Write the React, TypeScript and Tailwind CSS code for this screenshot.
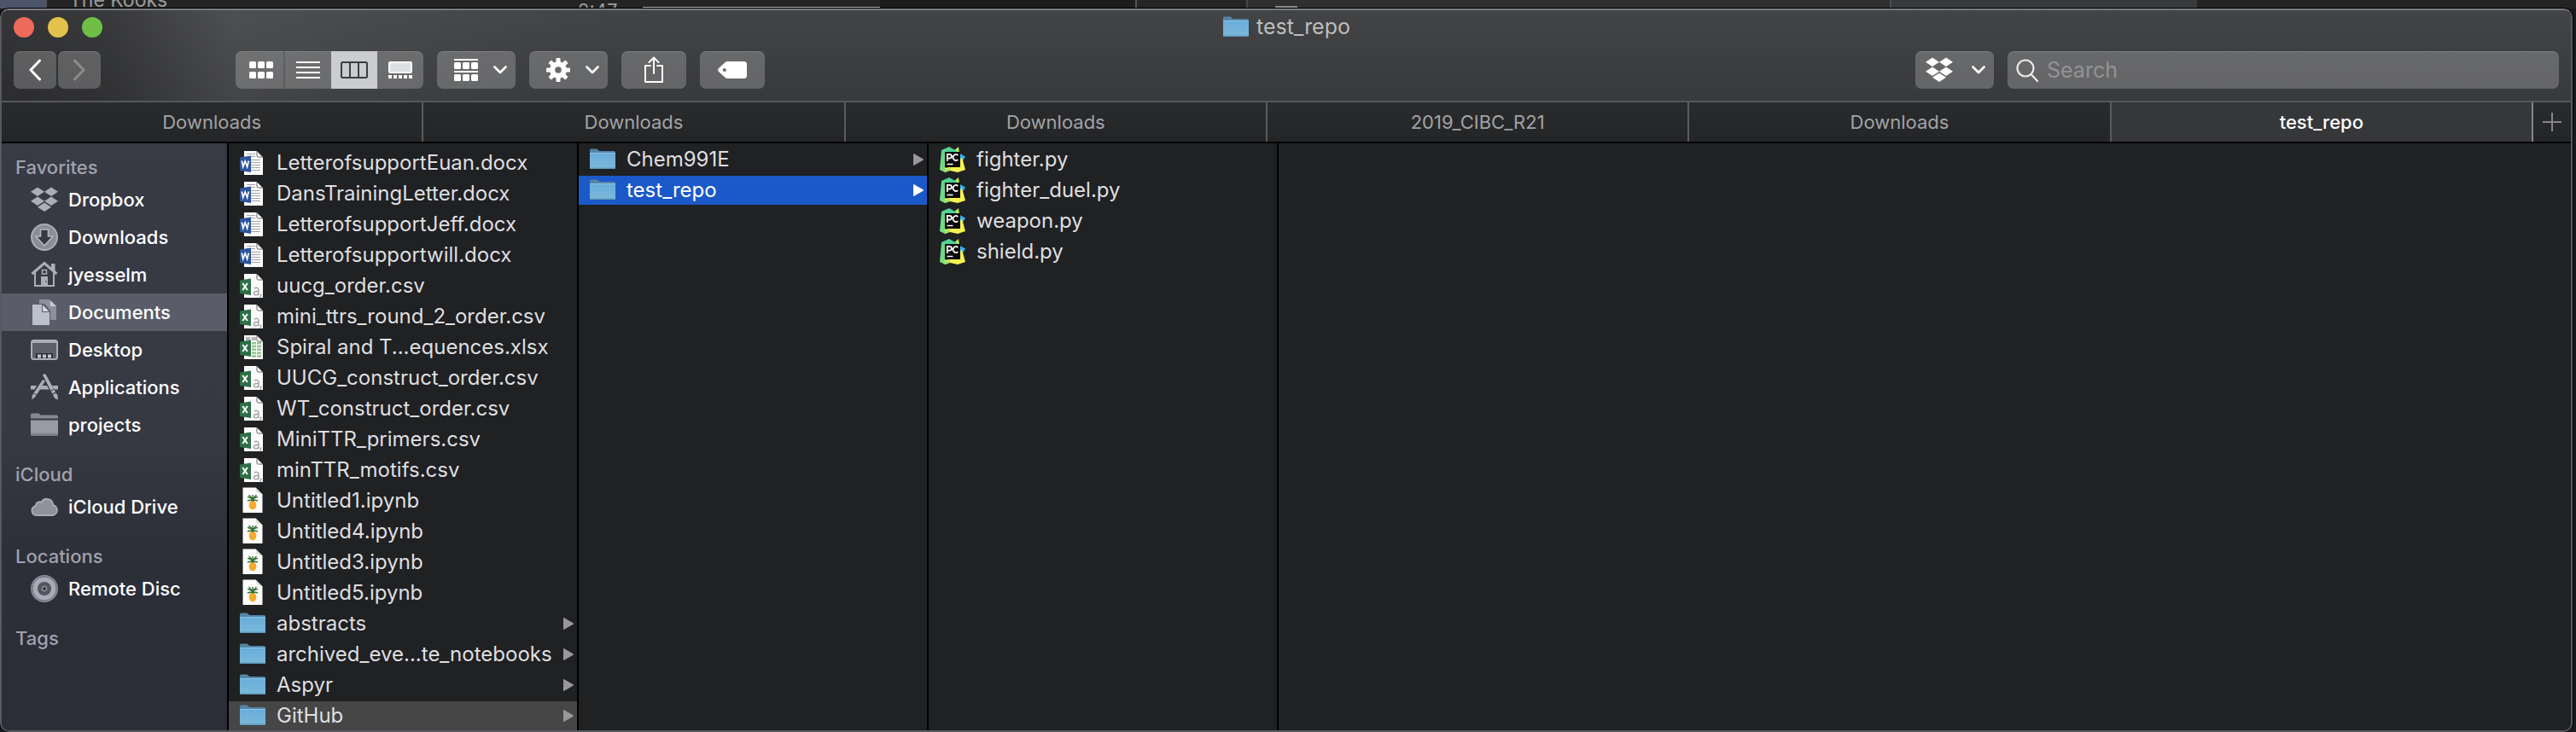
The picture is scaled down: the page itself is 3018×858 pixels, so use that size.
import React from "react";

type Kind = "word" | "csv" | "xlsx" | "notebook" | "folder" | "python";
type Entry = { name: string; kind: Kind; state?: "selected" | "path" };

const documents: Entry[] = [
  { name: "LetterofsupportEuan.docx", kind: "word" },
  { name: "DansTrainingLetter.docx", kind: "word" },
  { name: "LetterofsupportJeff.docx", kind: "word" },
  { name: "Letterofsupportwill.docx", kind: "word" },
  { name: "uucg_order.csv", kind: "csv" },
  { name: "mini_ttrs_round_2_order.csv", kind: "csv" },
  { name: "Spiral and T...equences.xlsx", kind: "xlsx" },
  { name: "UUCG_construct_order.csv", kind: "csv" },
  { name: "WT_construct_order.csv", kind: "csv" },
  { name: "MiniTTR_primers.csv", kind: "csv" },
  { name: "minTTR_motifs.csv", kind: "csv" },
  { name: "Untitled1.ipynb", kind: "notebook" },
  { name: "Untitled4.ipynb", kind: "notebook" },
  { name: "Untitled3.ipynb", kind: "notebook" },
  { name: "Untitled5.ipynb", kind: "notebook" },
  { name: "abstracts", kind: "folder" },
  { name: "archived_eve...te_notebooks", kind: "folder" },
  { name: "Aspyr", kind: "folder" },
  { name: "GitHub", kind: "folder", state: "path" },
];

const github: Entry[] = [
  { name: "Chem991E", kind: "folder" },
  { name: "test_repo", kind: "folder", state: "selected" },
];

const repo: Entry[] = [
  { name: "fighter.py", kind: "python" },
  { name: "fighter_duel.py", kind: "python" },
  { name: "weapon.py", kind: "python" },
  { name: "shield.py", kind: "python" },
];

const tabs = ["Downloads", "Downloads", "Downloads", "2019_CIBC_R21", "Downloads", "test_repo"];

/* ---------- file icons, 32 x 32 ---------- */

function FolderIcon() {
  return (
    <svg viewBox="0 0 32 32" className="size-8 shrink-0" aria-hidden="true">
      <defs>
        <linearGradient id="folder-front" x1="0" y1="0" x2="0" y2="1">
          <stop offset="0" stopColor="#69addb" />
          <stop offset="1" stopColor="#7cb8da" />
        </linearGradient>
      </defs>
      <path d="M1 5a1.500 1.500 0 0 1 1.500-1.500h6.500c1.600 0 2 2.500 4 2.500h16.500a1.500 1.500 0 0 1 1.500 1.500V13H1z" fill="#5484a5" />
      <path d="M1 8.500h30V26a1 1 0 0 1-1 1H2a1 1 0 0 1-1-1z" fill="url(#folder-front)" />
      <path d="M1 8h30v1H1z" fill="#8ac6ea" />
      <path d="M1 25.500h30V26a1 1 0 0 1-1 1H2a1 1 0 0 1-1-1z" fill="#5e97ba" />
    </svg>
  );
}

function Page() {
  return (
    <>
      <path d="M6 2h15l7 7v21H6z" fill="#fbfbfb" />
      <path d="M21 2l7 7h-5.500A1.500 1.500 0 0 1 21 7.500z" fill="#fff" stroke="#3c3c3c" strokeWidth=".8" />
    </>
  );
}

function WordIcon() {
  return (
    <svg viewBox="0 0 32 32" className="size-8 shrink-0" aria-hidden="true">
      <Page />
      <path d="M9 5.500h10M9 8.500h10M14 12.500h11M14 15.500h11M14 18.500h11M14 21.500h11M14 24.500h11" stroke="#a5a5a5" strokeWidth="1" />
      <path d="M1 9.500L14 7.500v19.500L1 25z" fill="#2f549b" />
      <path d="M3.300 13.500l1.500 7 2.400-6.500 2.400 6.500 1.700-7" fill="none" stroke="#fff" strokeWidth="1.700" />
    </svg>
  );
}

function ExcelBadge() {
  return (
    <>
      <path d="M1 9.500L14 7.500v19.500L1 25z" fill="#2f6f47" />
      <path d="M4.300 13l5.600 8M9.900 13l-5.600 8" stroke="#fff" strokeWidth="2" />
    </>
  );
}

function CsvIcon() {
  return (
    <svg viewBox="0 0 32 32" className="size-8 shrink-0" aria-hidden="true">
      <Page />
      <path d="M18 19.300c1.500-1.400 5-1.600 5 1.400V27M23 22.300c-3 0-5.600.4-5.600 2.500 0 2.800 4.400 2.600 5.600.2M26 25.500l-1 4" fill="none" stroke="#a2a2a2" strokeWidth="1.400" />
      <ExcelBadge />
    </svg>
  );
}

function XlsxIcon() {
  return (
    <svg viewBox="0 0 32 32" className="size-8 shrink-0" aria-hidden="true">
      <Page />
      <path d="M8 4h5v4H8zM14.500 4H20v4h-5.500z" fill="#b5b5b5" />
      <path d="M15 10h5v2.500h-5zM15 13.800h5v2.500h-5zM15 17.600h5v2.500h-5zM15 21.400h5v2.500h-5zM15 25.200h5v2.500h-5zM21 10h5v2.500h-5zM21 13.800h5v2.500h-5zM21 17.600h5v2.500h-5zM21 21.400h5v2.500h-5zM21 25.200h5v2.500h-5z" fill="#93c48f" />
      <ExcelBadge />
    </svg>
  );
}

function NotebookIcon() {
  return (
    <svg viewBox="0 0 32 32" className="size-8 shrink-0" aria-hidden="true">
      <path d="M4.500 0.500H19.500L27.500 8.500V30H4.500z" fill="#fcfcfc" />
      <path d="M19.500 0.500L27.500 8.500C25 7.500 22.500 7 20.500 5.500z" fill="#dcdcdc" />
      <ellipse cx="16" cy="21" rx="4.400" ry="5.200" fill="#f6ab2e" />
      <path d="M16 16V9M16 16c-1-3-3.500-4.500-6-4.500M16 16c1-3 3.500-4.500 6-4.500M16 15c-1.500-3-3-5-4.500-6M16 15c1.500-3 3-5 4.500-6M16 16c-2-1-4-1-6 0M16 16c2-1 4-1 6 0" fill="none" stroke="#356f35" strokeWidth="1.400" />
    </svg>
  );
}

function PythonIcon() {
  return (
    <svg viewBox="0 0 32 32" className="size-8 shrink-0" aria-hidden="true">
      <defs>
        <linearGradient id="py-left" x1="0" y1="1" x2="1" y2="0">
          <stop offset="0" stopColor="#7fe07c" />
          <stop offset="1" stopColor="#3ccba0" />
        </linearGradient>
      </defs>
      <path d="M23 8l8 4.500-3 5-5 1z" fill="#35b4e8" />
      <path d="M17 6l6-5 1 7-4 3z" fill="#b9e85c" />
      <path d="M3 5l9-4 9 5-3 6-10 2v14l-1 3-6-3z" fill="url(#py-left)" />
      <path d="M7 26l15-3 4-10 2 4 3 11-9 3-9-2-6 2z" fill="#f6f253" />
      <path d="M6 28l8-2-2 3-5 2z" fill="#97e36c" />
      <rect x="7" y="7" width="18" height="18" fill="#0b0b0b" />
      <path d="M9.800 18V9.800h2.700a2.200 2.200 0 0 1 0 4.800H9.800M22.300 11a3.400 3.400 0 1 0 0 5" fill="none" stroke="#fff" strokeWidth="1.700" />
      <path d="M9.500 21.500h7" stroke="#fff" strokeWidth="1.400" />
    </svg>
  );
}

const icons: Record<Kind, () => React.JSX.Element> = {
  word: WordIcon,
  csv: CsvIcon,
  xlsx: XlsxIcon,
  notebook: NotebookIcon,
  folder: FolderIcon,
  python: PythonIcon,
};

/* ---------- sidebar icons, 32 x 32 ---------- */

const side = "size-8 shrink-0 text-[#abadb9]";

const DropboxIcon = ({ className }: { className: string }) => (
  <svg viewBox="0 0 32 32" className={className} fill="currentColor" aria-hidden="true">
    <path d="M8 1.500l8 5.200-8 5.200-8-5.200zM24 1.500l8 5.200-8 5.200-8-5.200zM8 12.500l8 5.200-8 5.200-8-5.200zM24 12.500l8 5.200-8 5.200-8-5.200zM16 19.500l8 5.200-8 5.200-8-5.200z" />
  </svg>
);

const DownloadsIcon = () => (
  <svg viewBox="0 0 32 32" className={side} aria-hidden="true">
    <circle cx="16" cy="16" r="15" fill="#8a8c97" stroke="currentColor" strokeWidth="2" />
    <path d="M11.500 7h9v8h5.500L16 26 6 15h5.500z" fill="#363843" stroke="#b4b6c2" strokeWidth="1.600" />
  </svg>
);

const HomeIcon = () => (
  <svg viewBox="0 0 32 32" className={side} aria-hidden="true">
    <path d="M1.500 15L16 2.500 30.500 15" fill="none" stroke="currentColor" strokeWidth="3" />
    <path d="M24 3h4.500v10L24 9z" fill="currentColor" />
    <path d="M5 13v16h22V13" fill="none" stroke="currentColor" strokeWidth="2" />
    <path d="M13.500 10.500h5v4.500h-5z" fill="none" stroke="currentColor" strokeWidth="1.500" />
    <path d="M12 18h8v11h-8z" fill="currentColor" />
    <path d="M18 23v2" stroke="#363843" />
  </svg>
);

const DocumentsIcon = () => (
  <svg viewBox="0 0 32 32" className={side} aria-hidden="true">
    <path d="M10 1h12v8h8v16h-7V14l-7-8h-6z" fill="#8d909c" />
    <path d="M22.500 1.500l7.500 7.500h-7.500z" fill="#c7cad7" />
    <path d="M2 7h11v9h9v15H2z" fill="#bcc0ce" />
    <path d="M14 7.500l7.500 7.500H14z" fill="#d5d8e4" />
  </svg>
);

const DesktopIcon = () => (
  <svg viewBox="0 0 32 32" className={side} aria-hidden="true">
    <rect x="1" y="5" width="30" height="22" rx="2.500" fill="#5d5f6b" stroke="currentColor" strokeWidth="2" />
    <path d="M2 5h28v3H2z" fill="currentColor" />
    <path d="M6 20h20v6H6z" fill="#2d2f39" />
    <path d="M8 21.500h4v4H8zM14 21.500h4v4h-4zM20 21.500h4v4h-4z" fill="#c4c6d2" />
  </svg>
);

const ApplicationsIcon = () => (
  <svg viewBox="0 0 32 32" className={side} aria-hidden="true">
    <path d="M0 14h7l-2.500 4.500H0zM13 14h6l2.500 4.500h-11zM25 14h7v4.500h-4.500z" fill="currentColor" />
    <path d="M14 7l3 1.500L5.500 27 1 30.500 2 25z" fill="currentColor" />
    <path d="M14 1.500a2.200 2.200 0 0 1 3.700-.500L29 21.500l-3.700 2z" fill="currentColor" />
    <path d="M26 24.500l3.500-2c2 2.500 2.500 4 2.300 8-3-1-5-2.500-5.800-6z" fill="currentColor" />
    <path d="M3.500 23l3.500 2M23 20.500l4.500-2.500" stroke="#363843" strokeWidth="1" />
  </svg>
);

const ProjectsIcon = () => (
  <svg viewBox="0 0 32 32" className={side} aria-hidden="true">
    <path d="M0 4a1.500 1.500 0 0 1 1.500-1.500h7.500c1.500 0 1.500 2 3.500 2h18A1.500 1.500 0 0 1 32 6v2.500H0z" fill="#858793" />
    <path d="M0 10.500h32V27a1.500 1.500 0 0 1-1.500 1.500h-29A1.500 1.500 0 0 1 0 27z" fill="#989aa6" />
    <path d="M0 25.500h32V27a1.500 1.500 0 0 1-1.500 1.500h-29A1.500 1.500 0 0 1 0 27z" fill="#82848f" />
  </svg>
);

const CloudIcon = () => (
  <svg viewBox="0 0 32 32" className={side} aria-hidden="true">
    <path d="M6.500 26a5.500 5.500 0 0 1-1-10.800 5 5 0 0 1 7-4.600A7.300 7.300 0 0 1 26.200 14a6.100 6.100 0 0 1-.7 12z" fill="#8f919d" stroke="currentColor" strokeWidth="1.800" />
  </svg>
);

const DiscIcon = () => (
  <svg viewBox="0 0 32 32" className={side} aria-hidden="true">
    <circle cx="16" cy="16" r="16" fill="#8a8c97" />
    <circle cx="16" cy="16" r="14" fill="#a9abb8" stroke="#5f616c" strokeWidth=".8" />
    <circle cx="16" cy="16" r="8" fill="#53555f" />
    <circle cx="16" cy="16" r="2.600" fill="#2f313b" stroke="#9698a4" strokeWidth="1.400" />
  </svg>
);

const sections: { title: string; items: { label: string; icon: React.ReactNode; active?: boolean }[] }[] = [
  {
    title: "Favorites",
    items: [
      { label: "Dropbox", icon: <DropboxIcon className={side} /> },
      { label: "Downloads", icon: <DownloadsIcon /> },
      { label: "jyesselm", icon: <HomeIcon /> },
      { label: "Documents", icon: <DocumentsIcon />, active: true },
      { label: "Desktop", icon: <DesktopIcon /> },
      { label: "Applications", icon: <ApplicationsIcon /> },
      { label: "projects", icon: <ProjectsIcon /> },
    ],
  },
  { title: "iCloud", items: [{ label: "iCloud Drive", icon: <CloudIcon /> }] },
  { title: "Locations", items: [{ label: "Remote Disc", icon: <DiscIcon /> }] },
  { title: "Tags", items: [] },
];

/* ---------- toolbar ---------- */

const Chevron = () => (
  <svg viewBox="0 0 16 10" className="h-[10px] w-4" fill="none" stroke="#fff" strokeWidth="2.600" strokeLinecap="round" strokeLinejoin="round" aria-hidden="true">
    <path d="M1.500 1.500L8 8l6.500-6.500" />
  </svg>
);

const ctl =
  "flex h-11 items-center rounded-[7px] bg-white/22 shadow-[inset_0_1px_0_rgba(255,255,255,0.13)]";

function Toolbar() {
  return (
    <div className="mt-2 flex gap-4">
      <div className="mr-[142px] flex gap-[2px]">
        <button type="button" aria-label="Back" className={`${ctl} w-[50px] justify-center`}>
          <svg viewBox="0 0 16 26" className="h-[26px] w-4" fill="none" stroke="#fff" strokeWidth="3" strokeLinecap="round" strokeLinejoin="round">
            <path d="M13.500 2L3 13l10.500 11" />
          </svg>
        </button>
        <button type="button" aria-label="Forward" disabled className={`${ctl} w-[50px] justify-center`}>
          <svg viewBox="0 0 16 26" className="h-[26px] w-4" fill="none" stroke="#8b8c8e" strokeWidth="3" strokeLinecap="round" strokeLinejoin="round">
            <path d="M2.500 2L13 13 2.500 24" />
          </svg>
        </button>
      </div>

      <div role="group" aria-label="View" className={`${ctl} overflow-hidden`}>
        <button type="button" aria-label="Icons" className="flex h-full w-[58px] items-center justify-center border-r-2 border-black/15 pl-1">
          <svg viewBox="0 0 28 20" className="h-5 w-7" fill="#fff">
            {[0, 10, 20].map((x) => [0, 12].map((y) => <rect key={`${x}-${y}`} x={x} y={y} width="8" height="8" rx="1.500" />))}
          </svg>
        </button>
        <button type="button" aria-label="List" className="flex h-full w-[54px] items-center justify-center">
          <svg viewBox="0 0 28 20" className="h-5 w-7" fill="#fff">
            <path d="M0 0h28v2H0zM0 6h28v2H0zM0 12h28v2H0zM0 18h28v2H0z" />
          </svg>
        </button>
        <button type="button" aria-label="Columns" aria-pressed="true" className="flex h-full w-[54px] items-center justify-center bg-[#cbccce]">
          <svg viewBox="0 0 32 20" className="h-5 w-8" fill="none" stroke="#3c3d3f" strokeWidth="2">
            <rect x="1" y="1" width="30" height="18" rx="1.500" />
            <path d="M11 1v18M21 1v18" />
          </svg>
        </button>
        <button type="button" aria-label="Gallery" className="flex h-full w-[54px] items-center justify-center">
          <svg viewBox="0 0 28 20" className="h-5 w-7">
            <rect x="1" y="1" width="26" height="12" rx="1" fill="#dedfe1" stroke="#fff" strokeWidth="2" />
            <path d="M0 16h4v4H0zM6 16h4v4H6zM12 16h4v4h-4zM18 16h4v4h-4zM24 16h4v4h-4z" fill="#fff" />
          </svg>
        </button>
      </div>

      <button type="button" aria-label="Group by" className={`${ctl} w-[92px] justify-between pr-[10px] pl-5`}>
        <svg viewBox="0 0 28 28" className="size-7" fill="#fff">
          <path d="M0 1h28v2H0zM0 15h28v2H0z" />
          {[0, 10, 20].map((x) => [5, 19].map((y) => <rect key={`${x}-${y}`} x={x} y={y} width="8" height="8" rx="1.500" />))}
        </svg>
        <Chevron />
      </button>

      <button type="button" aria-label="Actions" className={`${ctl} w-[92px] justify-between pr-[10px] pl-5`}>
        <svg viewBox="0 0 28 28" className="size-7">
          <g fill="#fff">
            {[0, 45, 90, 135].map((a) => (
              <rect key={a} x="11.500" y="0" width="5" height="28" rx="1" transform={`rotate(${a} 14 14)`} />
            ))}
            <circle cx="14" cy="14" r="10" />
          </g>
          <circle cx="14" cy="14" r="3.800" fill="#68696b" />
        </svg>
        <Chevron />
      </button>

      <button type="button" aria-label="Share" className={`${ctl} w-[76px] justify-center`}>
        <svg viewBox="0 0 22 32" className="h-8 w-[22px]" fill="none" stroke="#fff" strokeWidth="2" strokeLinecap="round" strokeLinejoin="round">
          <path d="M7 11H1v19h20V11h-6M11 20V1.500M5.500 7L11 1.500 16.500 7" />
        </svg>
      </button>

      <button type="button" aria-label="Tags" className={`${ctl} w-[76px] justify-center`}>
        <svg viewBox="0 0 34 20" className="h-5 w-[34px]">
          <path d="M9 .8A4 4 0 0 1 11.500 0H30.500A3.500 3.500 0 0 1 34 3.500v13A3.500 3.500 0 0 1 30.500 20H11.500A4 4 0 0 1 9 19.200L1 12Q-.8 10 1 8z" fill="#fff" />
          <circle cx="7.800" cy="10" r="2.100" fill="#68696b" />
        </svg>
      </button>

      <button type="button" aria-label="Dropbox" className={`${ctl} ml-auto w-[92px] justify-between pr-[10px] pl-3`}>
        <DropboxIcon className="size-8 text-white" />
        <Chevron />
      </button>

      <label className={`${ctl} w-[646px] gap-2 pl-[10px]`}>
        <svg viewBox="0 0 28 28" className="size-7 shrink-0" fill="none" stroke="#ececec" strokeWidth="2.200" strokeLinecap="round" aria-hidden="true">
          <circle cx="11" cy="12" r="9.500" />
          <path d="M17.500 19l7.500 8" />
        </svg>
        <input
          type="search"
          aria-label="Search"
          placeholder="Search"
          className="h-full min-w-0 flex-1 bg-transparent text-[25px] text-white outline-none placeholder:text-[#929395]"
        />
      </label>
    </div>
  );
}

/* ---------- columns ---------- */

function Column({ label, entries, className }: { label: string; entries: Entry[]; className: string }) {
  return (
    <ul aria-label={label} className={`flex w-[410px] shrink-0 flex-col gap-[2px] border-r-2 border-black text-[24px] ${className}`}>
      {entries.map((entry) => {
        const Icon = icons[entry.kind];
        const selected = entry.state === "selected";
        const tone = selected ? "bg-[#1b59c9] text-white" : entry.state === "path" ? "bg-[#464646] text-[#dfdfe0]" : "text-[#dfdfe0]";
        return (
          <li key={entry.name}>
            <button type="button" className={`flex h-[34px] w-full items-center gap-3 pr-1 pl-3 text-left ${tone}`}>
              <Icon />
              <span className="flex-1 whitespace-nowrap leading-[34px]">{entry.name}</span>
              {entry.kind === "folder" && (
                <svg viewBox="0 0 12 14" className={selected ? "h-[14px] w-3 text-white" : "h-[14px] w-3 text-[#98989a]"} fill="currentColor" aria-hidden="true">
                  <path d="M0 .5Q0-.3 1 .2L11.500 6.300Q12.300 7 11.500 7.700L1 13.800Q0 14.300 0 13.500z" />
                </svg>
              )}
            </button>
          </li>
        );
      })}
    </ul>
  );
}

export default function App() {
  return (
    <div className="flex min-h-screen flex-col bg-[#191a1c] font-['Inter','Liberation_Sans',sans-serif] text-[25px]">
      <div className="flex h-[10px] overflow-hidden bg-[#242424] text-[#9b9b9b]">
        <div className="w-[53px] bg-[#4b5468]" />
        <div className="flex w-[624px] items-end border-l-2 border-[#555] pl-[26px] text-[23px] leading-5">The Kooks</div>
        <div className="w-[76px] text-[22px] leading-6">2:47</div>
        <div className="flex w-[278px] items-end pb-px">
          <div className="h-px w-full bg-[#b0b0b0]" />
        </div>
        <div className="w-[301px] border-r-2 border-[#555] bg-[#1c1c1c]" />
        <div className="w-[130px] border-r-2 border-[#47474c] bg-[#252525]" />
        <div className="flex w-[752px] items-end bg-[#2f2f2f] pb-px pl-8">
          <div className="h-[2px] w-[26px] bg-[#8a8a8a]" />
        </div>
        <div className="w-[360px] border-l-2 border-[#4b4c4e] bg-[#373b3d]" />
      </div>

      <main className="mr-1 flex flex-1 flex-col overflow-hidden rounded-[10px] border-2 border-[#58595c] border-t-[#7a7b7d] bg-[#202123] outline-1 outline-black">
        <header className="border-b-2 border-[#56575a] bg-[linear-gradient(90deg,rgba(0,0,0,0.22)_0%,rgba(0,0,0,0.16)_4%,rgba(255,255,255,0.06)_9%,rgba(255,255,255,0.03)_15%,rgba(0,0,0,0)_24%),linear-gradient(180deg,#434446,#38393b)] px-[14px] pb-[14px]">
          <div className="grid h-10 grid-cols-[1fr_auto_1fr] items-center">
            <div className="flex gap-4">
              <button type="button" aria-label="Close" className="size-6 rounded-full bg-[#ee6a5a]" />
              <button type="button" aria-label="Minimize" className="size-6 rounded-full bg-[#e2c14c]" />
              <button type="button" aria-label="Zoom" className="size-6 rounded-full bg-[#6fbf47]" />
            </div>
            <h1 className="flex items-center gap-2 text-[#bdbdbf]">
              <FolderIcon />
              test_repo
            </h1>
          </div>
          <Toolbar />
        </header>

        <div className="flex h-12 border-b-2 border-black bg-[linear-gradient(180deg,#2a2b2d,#242527)] text-[22px]">
          <div role="tablist" className="flex flex-1">
            {tabs.map((tab, i) => {
              const active = i === tabs.length - 1;
              return (
                <button
                  key={i}
                  type="button"
                  role="tab"
                  aria-selected={active}
                  className={
                    active
                      ? "flex-1 border-r-2 border-[#858688] bg-[#363739] font-medium text-white"
                      : "flex-1 border-r-2 border-[#5a5b5d] text-[#a2a3a5]"
                  }
                >
                  {tab}
                </button>
              );
            })}
          </div>
          <button type="button" aria-label="New tab" className="flex w-11 items-center justify-center">
            <svg viewBox="0 0 22 22" className="size-[22px]" stroke="#868688" strokeWidth="2">
              <path d="M11 0v22M0 11h22" />
            </svg>
          </button>
        </div>

        <div className="flex flex-1">
          <nav aria-label="Sidebar" className="flex w-[266px] shrink-0 flex-col gap-5 border-r-2 border-black bg-[linear-gradient(180deg,#383a45_0%,#363842_50%,#2c2e38_72%,#2b2d37_100%)] pt-3 text-[22px] font-medium">
            {sections.map((section) => (
              <section key={section.title}>
                <h2 className="pl-4 leading-8 text-[#a0a2ad]">{section.title}</h2>
                {section.items.map((item) => (
                  <a
                    key={item.label}
                    href="#"
                    className={
                      item.active
                        ? "flex h-11 items-center gap-3 bg-[#5a5d69] pl-[34px] text-white"
                        : "flex h-11 items-center gap-3 pl-[34px] text-white"
                    }
                  >
                    {item.icon}
                    {item.label}
                  </a>
                ))}
              </section>
            ))}
          </nav>
          <Column label="Documents" entries={documents} className="pt-[6px]" />
          <Column label="GitHub" entries={github} className="pt-[2px]" />
          <Column label="test_repo" entries={repo} className="pt-[2px]" />
        </div>
      </main>
    </div>
  );
}
